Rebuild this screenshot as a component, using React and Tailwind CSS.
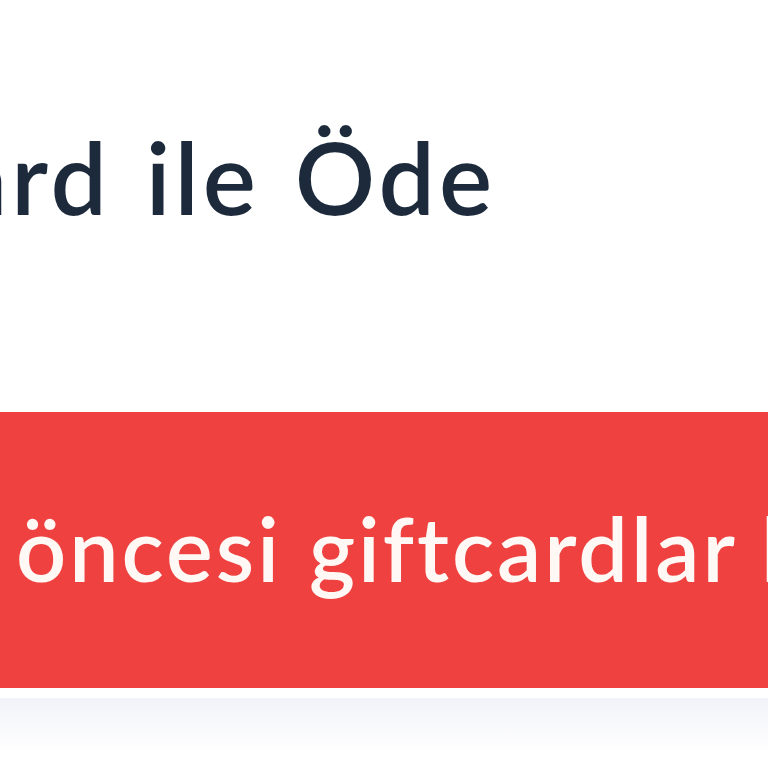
export default function App() {
  return (
    <div
      className="w-[768px] h-[768px] overflow-hidden bg-white"
      style={{ fontFamily: "Lato, 'Open Sans', sans-serif" }}
    >
      <div className="pt-[126px] h-[412px]">
        <div className="w-[496px] flex justify-end">
          <h1 className="whitespace-nowrap text-[100px] leading-none font-semibold tracking-[4px] [word-spacing:6px] text-[#1c2a3c]">
            Giftcard ile Öde
          </h1>
        </div>
      </div>
      <div className="h-[276px] bg-[#ee4140] pt-[92px] pl-[16px] overflow-hidden">
        <p className="whitespace-nowrap text-[88px] leading-none font-semibold tracking-[3px] [word-spacing:2px] text-[#fff8f4]">
          öncesi giftcardlar <span className="ml-[-2px]">kullanılabilir</span>
        </p>
      </div>
      <div className="h-[10px] bg-white" />
      <div className="h-[56px] bg-gradient-to-b from-[#f2f3f9] to-white" />
    </div>
  );
}
